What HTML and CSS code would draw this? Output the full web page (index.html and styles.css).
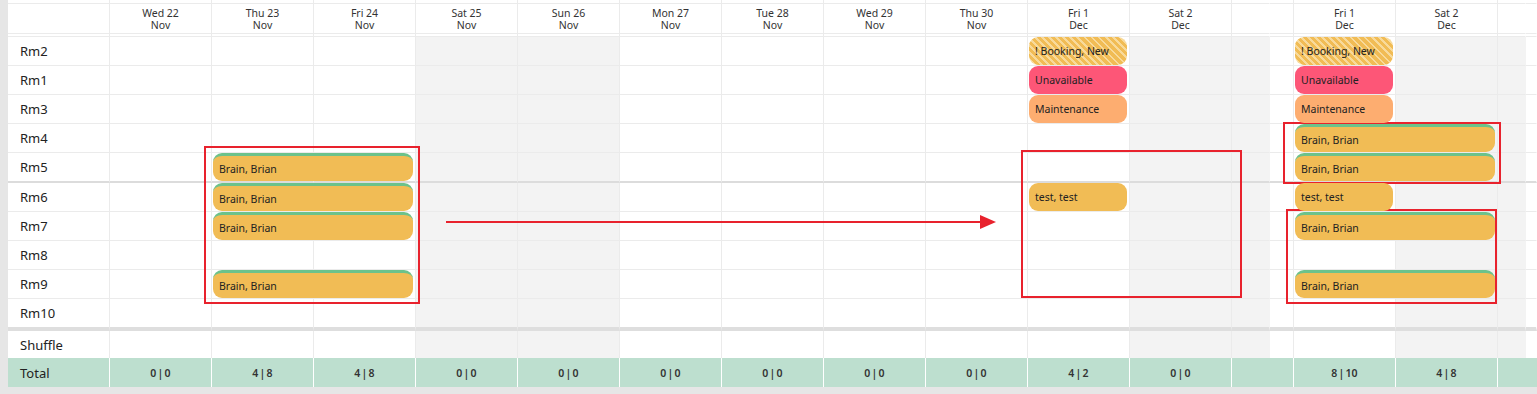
FILE: index.html
```html
<!DOCTYPE html>
<html lang="en">
<head>
  <meta charset="UTF-8" />
  <meta name="viewport" content="width=device-width, initial-scale=1.0" />
  <title>Room Scheduler</title>
  <link rel="stylesheet" href="styles.css">
</head>
<body>
  <div class="page">
    <div class="board" id="board"></div>

    <!-- annotations -->
    <div class="mark mark-a"></div>
    <div class="mark mark-b"></div>
    <div class="mark mark-c"></div>
    <div class="mark mark-d"></div>
    <svg class="arrow" width="560" height="24" viewBox="0 0 560 24">
      <line x1="6" y1="12" x2="542" y2="12" stroke="#e8222d" stroke-width="2" />
      <polygon points="540,5 556,12 540,19" fill="#e8222d" />
    </svg>
  </div>

  <script>
    const cols = [
      { label: true },
      { d: 'Wed 22', m: 'Nov', t: '0 | 0' },
      { d: 'Thu 23', m: 'Nov', t: '4 | 8' },
      { d: 'Fri 24', m: 'Nov', t: '4 | 8' },
      { d: 'Sat 25', m: 'Nov', t: '0 | 0', we: true },
      { d: 'Sun 26', m: 'Nov', t: '0 | 0', we: true },
      { d: 'Mon 27', m: 'Nov', t: '0 | 0' },
      { d: 'Tue 28', m: 'Nov', t: '0 | 0' },
      { d: 'Wed 29', m: 'Nov', t: '0 | 0' },
      { d: 'Thu 30', m: 'Nov', t: '0 | 0' },
      { d: 'Fri 1', m: 'Dec', t: '4 | 2' },
      { d: 'Sat 2', m: 'Dec', t: '0 | 0', we: true },
      { we: true, cut: true },
      {},
      { d: 'Fri 1', m: 'Dec', t: '8 | 10' },
      { d: 'Sat 2', m: 'Dec', t: '4 | 8', we: true },
      { we: true, cut: true },
      { cut: true }
    ];

    const rooms = ['Rm2', 'Rm1', 'Rm3', 'Rm4', 'Rm5', 'Rm6', 'Rm7', 'Rm8', 'Rm9', 'Rm10'];
    const rows = ['top', 'head', 'gap', ...rooms, 'Shuffle', 'Total'];

    const bars = [
      { room: 'Rm5', col: 2, span: 2, text: 'Brain, Brian', kind: 'guest' },
      { room: 'Rm6', col: 2, span: 2, text: 'Brain, Brian', kind: 'guest' },
      { room: 'Rm7', col: 2, span: 2, text: 'Brain, Brian', kind: 'guest' },
      { room: 'Rm9', col: 2, span: 2, text: 'Brain, Brian', kind: 'guest' },
      { room: 'Rm2', col: 10, span: 1, text: '! Booking, New', kind: 'hold' },
      { room: 'Rm1', col: 10, span: 1, text: 'Unavailable', kind: 'off' },
      { room: 'Rm3', col: 10, span: 1, text: 'Maintenance', kind: 'fix' },
      { room: 'Rm6', col: 10, span: 1, text: 'test, test', kind: '' },
      { room: 'Rm2', col: 14, span: 1, text: '! Booking, New', kind: 'hold' },
      { room: 'Rm1', col: 14, span: 1, text: 'Unavailable', kind: 'off' },
      { room: 'Rm3', col: 14, span: 1, text: 'Maintenance', kind: 'fix' },
      { room: 'Rm4', col: 14, span: 2, text: 'Brain, Brian', kind: 'guest' },
      { room: 'Rm5', col: 14, span: 2, text: 'Brain, Brian', kind: 'guest' },
      { room: 'Rm6', col: 14, span: 1, text: 'test, test', kind: '' },
      { room: 'Rm7', col: 14, span: 2, text: 'Brain, Brian', kind: 'guest' },
      { room: 'Rm9', col: 14, span: 2, text: 'Brain, Brian', kind: 'guest' }
    ];

    const board = document.getElementById('board');

    rows.forEach((row, r) => {
      const isRoom = rooms.includes(row);
      cols.forEach((col, c) => {
        const cell = document.createElement('div');
        cell.className = 'cell';
        cell.style.gridArea = `${r + 1} / ${c + 1}`;
        if (col.cut) cell.classList.add('noline');

        if (row === 'top') cell.classList.add('row-top');
        else if (row === 'head') {
          cell.classList.add('row-head');
          if (col.d) cell.innerHTML = `<span>${col.d}</span><span>${col.m}</span>`;
        }
        else if (row === 'gap') cell.classList.add('row-gap');
        else if (row === 'Total') {
          cell.classList.add('row-total');
          if (col.label) { cell.classList.add('label'); cell.textContent = 'Total'; }
          else if (col.t) cell.textContent = col.t;
        }
        else {
          cell.classList.add(isRoom ? 'row-room' : 'row-shuffle');
          if (row === 'Rm5') cell.classList.add('sep');
          if (row === 'Rm10') cell.classList.add('last');
          if (col.label) { cell.classList.add('label'); cell.textContent = row; }
          else if (col.we) cell.classList.add('weekend');
        }
        board.appendChild(cell);
      });
    });

    bars.forEach(b => {
      const bar = document.createElement('div');
      bar.className = 'bar ' + b.kind;
      bar.style.gridArea = `${rows.indexOf(b.room) + 1} / ${b.col + 1} / span 1 / span ${b.span}`;
      bar.textContent = b.text;
      board.appendChild(bar);
    });
  </script>
</body>
</html>
```

FILE: styles.css
```css
body {
  margin: 0;
  background: #e6e6e6;
  font-family: "Noto Sans", "Open Sans", sans-serif;
  color: #222;
}
.page {
  position: relative;
  padding: 0 0 7px 8px;
}
.board {
  display: grid;
  grid-template-columns: 102px repeat(11, 102px) 38px 24px 102px 102px 28px 11px;
  grid-template-rows: 4px 30px 3px repeat(4, 29px) 30px repeat(4, 29px) 32px 27px 29px;
  background: #ffffff;
}
.cell {
  box-sizing: border-box;
  border-right: 1px solid #ebebeb;
  border-bottom: 1px solid #ebebeb;
  min-width: 0;
}
.cell.noline {
  border-right-color: transparent;
}
.row-head {
  display: flex;
  flex-direction: column;
  align-items: center;
  justify-content: center;
  font-size: 10.5px;
  line-height: 12px;
  color: #333;
}
.label {
  display: flex;
  align-items: center;
  padding-left: 12px;
  font-size: 13px;
}
.row-room.sep {
  border-bottom: 2px solid #dcdcdc;
}
.row-room.last {
  border-bottom: 4px solid #dedede;
}
.row-shuffle {
  border-bottom: 0;
}
.weekend {
  background: #f3f3f3;
}
.row-total {
  background: #bddfcf;
  border-right-color: #ffffff;
  border-bottom: 0;
  display: flex;
  align-items: center;
  justify-content: center;
  font-size: 10.5px;
  font-weight: 600;
  word-spacing: -1.5px;
  color: #333;
}
.row-total.label {
  justify-content: flex-start;
  font-weight: 400;
  word-spacing: 0;
  font-size: 13px;
  color: #222;
}
.row-total.noline {
  border-right-color: transparent;
}
.bar {
  align-self: start;
  box-sizing: border-box;
  height: 28px;
  margin: 0 3px 0 1px;
  padding-left: 6px;
  border-radius: 9px;
  background: #f1bc55;
  display: flex;
  align-items: center;
  font-size: 10.5px;
  color: #222;
  white-space: nowrap;
  overflow: hidden;
  z-index: 1;
}
.bar.guest {
  border-top: 3px solid #6cc28b;
}
.bar.hold {
  background: repeating-linear-gradient(45deg, #f1bc55 0 3px, #f8da9b 3px 5px);
}
.bar.off {
  background: #fd5677;
}
.bar.fix {
  background: #fdad70;
}
.mark {
  position: absolute;
  box-sizing: border-box;
  border: 2px solid #e8222d;
}
.mark-a {
  left: 204px;
  top: 146px;
  width: 216px;
  height: 158px;
}
.mark-b {
  left: 1021px;
  top: 150px;
  width: 221px;
  height: 148px;
}
.mark-c {
  left: 1283px;
  top: 122px;
  width: 218px;
  height: 62px;
}
.mark-d {
  left: 1286px;
  top: 209px;
  width: 211px;
  height: 95px;
}
.arrow {
  position: absolute;
  left: 440px;
  top: 210px;
}
```
